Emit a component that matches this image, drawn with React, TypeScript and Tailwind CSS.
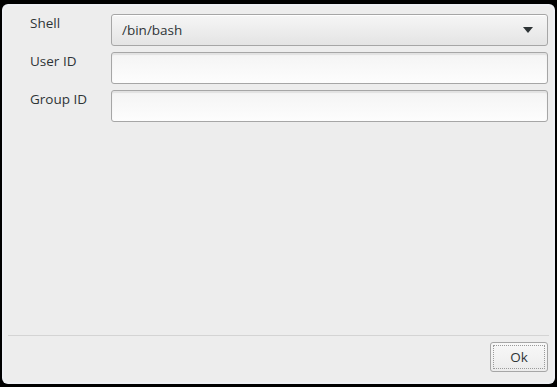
import React from "react";

export default function App() {
  const font = { fontFamily: '"Open Sans", "Noto Sans", sans-serif' };
  return (
    <div className="w-[557px] h-[387px] bg-black pt-[4px] pl-[2px] pr-[2px] pb-[3px]" style={font}>
      <div className="w-full h-full rounded-[6px] bg-[#eef0f4] p-[2px]">
        <div className="w-full h-full rounded-[5px] bg-[#ededed] flex flex-col text-[13.5px] text-[#2e3436]">
          <div className="flex-1 pt-[8px] pl-[26px] pr-[5px] flex flex-col gap-[6px]">
            <div className="flex">
              <div className="w-[81px] mt-[-1px]">Shell</div>
              <div className="flex-1 h-[32px] rounded-[3px] border border-[#a6a6a6] bg-gradient-to-b from-[#f6f6f6] to-[#e4e4e4] flex items-center pl-[10px] pr-[14px] shadow-[inset_0_1px_0_#ffffff]">
                <span className="flex-1">/bin/bash</span>
                <svg width="10" height="6" viewBox="0 0 10 6"><path d="M0 0 L10 0 L5 6 Z" fill="#2e3436" /></svg>
              </div>
            </div>
            <div className="flex">
              <div className="w-[81px] mt-[-1px]">User ID</div>
              <div className="flex-1 h-[32px] rounded-[3px] border border-[#a6a6a6] bg-gradient-to-b from-[#f4f4f4] to-[#fdfdfd] shadow-[inset_0_2px_1px_#e2e2e2]" />
            </div>
            <div className="flex">
              <div className="w-[81px] mt-[-1px]">Group ID</div>
              <div className="flex-1 h-[32px] rounded-[3px] border border-[#a6a6a6] bg-gradient-to-b from-[#f4f4f4] to-[#fdfdfd] shadow-[inset_0_2px_1px_#e2e2e2]" />
            </div>
          </div>
          <div className="mx-[4px] h-px bg-[#d4d4d4]" />
          <div className="flex justify-end pt-[6px] pb-[10px] pr-[5px]">
            <div className="w-[58px] h-[30px] rounded-[3px] border border-[#a6a6a6] bg-gradient-to-b from-[#f8f8f8] to-[#ececec] p-[2px]">
              <div className="w-full h-full border border-dotted border-[#9a9a9a] flex items-center justify-center text-[#2e3436]">Ok</div>
            </div>
          </div>
        </div>
      </div>
    </div>
  );
}
